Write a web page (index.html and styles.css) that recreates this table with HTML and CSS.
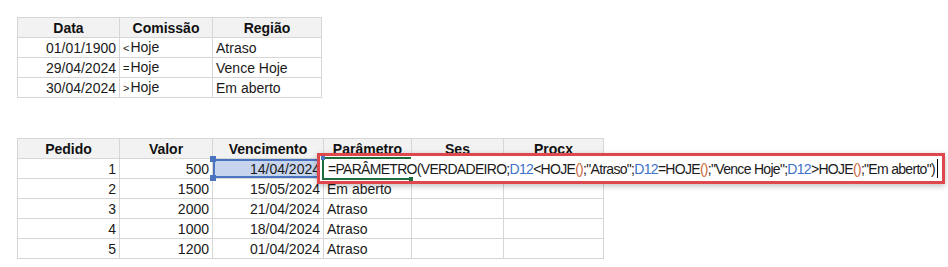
FILE: index.html
```html
<!DOCTYPE html>
<html lang="pt">
<head>
<meta charset="utf-8">
<link rel="stylesheet" href="styles.css">
</head>
<body>
<div class="sheet">
  <table class="grid top">
    <colgroup><col class="c1"><col class="c2"><col class="c3w"></colgroup>
    <tr class="head"><th>Data</th><th>Comissão</th><th>Região</th></tr>
    <tr><td class="r">01/01/1900</td><td><span class="op">&lt;</span>Hoje</td><td>Atraso</td></tr>
    <tr><td class="r">29/04/2024</td><td><span class="op">=</span>Hoje</td><td>Vence Hoje</td></tr>
    <tr><td class="r">30/04/2024</td><td><span class="op">&gt;</span>Hoje</td><td>Em aberto</td></tr>
  </table>

  <div class="lower">
    <table class="grid bottom">
      <colgroup><col class="c1"><col class="c2"><col class="c3"><col class="c4"><col class="c5"><col class="c6"></colgroup>
      <tr class="head"><th>Pedido</th><th>Valor</th><th>Vencimento</th><th>Parâmetro</th><th>Ses</th><th>Procx</th></tr>
      <tr><td class="r">1</td><td class="r">500</td><td class="r sel">14/04/2024<i class="h h1"></i><i class="h h2"></i><i class="h h3"></i><i class="h h4"></i></td><td></td><td></td><td></td></tr>
      <tr><td class="r">2</td><td class="r">1500</td><td class="r">15/05/2024</td><td>Em aberto</td><td></td><td></td></tr>
      <tr><td class="r">3</td><td class="r">2000</td><td class="r">21/04/2024</td><td>Atraso</td><td></td><td></td></tr>
      <tr><td class="r">4</td><td class="r">1000</td><td class="r">18/04/2024</td><td>Atraso</td><td></td><td></td></tr>
      <tr><td class="r">5</td><td class="r">1200</td><td class="r">01/04/2024</td><td>Atraso</td><td></td><td></td></tr>
    </table>

    <div class="formula">
      <div class="editcell"><i class="eh eh1"></i><i class="eh eh2"></i></div>
      <span class="ftext">=PARÂMETRO(VERDADEIRO;<span class="ref">D12</span>&lt;HOJE<span class="par">()</span>;"Atraso";<span class="ref">D12</span>=HOJE<span class="par">()</span>;"Vence Hoje";<span class="ref">D12</span>&gt;HOJE<span class="par">()</span>;"Em aberto")<span class="caret"></span></span>
    </div>
  </div>
</div>
</body>
</html>
```

FILE: styles.css
```css
* { box-sizing: border-box; }
html, body { margin: 0; padding: 0; background: #ffffff; }
body {
  width: 948px;
  height: 267px;
  overflow: hidden;
  font-family: "Liberation Sans", Arial, sans-serif;
  font-size: 14px;
  color: #1a1a1a;
}
.sheet {
  display: flex;
  flex-direction: column;
  align-items: flex-start;
  gap: 40px;
  padding: 17px 0 0 17px;
}
.grid {
  border-collapse: collapse;
  table-layout: fixed;
}
.grid.top { width: 304px; }
.grid.bottom { width: 586px; }
.grid th, .grid td {
  height: 20px;
  padding: 0 3px;
  border: 1px solid #d6d6d6;
  line-height: 18px;
  white-space: nowrap;
  overflow: visible;
}
.grid th {
  background: #f2f2f2;
  font-weight: bold;
  text-align: center;
  color: #111;
}
.grid td.r { text-align: right; }
.op { font-size: 11px; margin-right: 1px; }
.c1 { width: 102px; }
.c2 { width: 93px; }
.c3w { width: 109px; }
.c3 { width: 111px; }
.c4 { width: 88px; }
.c5 { width: 92px; }
.c6 { width: 100px; }

.lower { position: relative; }

.sel {
  position: relative;
  background: #c6d4ee;
  box-shadow: inset 0 0 0 2px #4a74bf;
}
.h {
  position: absolute;
  width: 6px;
  height: 6px;
  background: #4a74bf;
}
.h1 { left: -3px; top: -3px; }
.h2 { right: -3px; top: -3px; }
.h3 { left: -3px; bottom: -3px; }
.h4 { right: -3px; bottom: -3px; }

.formula {
  position: absolute;
  left: 300px;
  top: 15px;
  width: 628px;
  height: 31px;
  border: 3px solid #e0474c;
  background: #ffffff;
  box-shadow: 0 2px 6px rgba(0,0,0,0.25);
  display: flex;
  align-items: center;
  padding-left: 8px;
}
.editcell {
  position: absolute;
  left: 2px;
  top: 1px;
  width: 89px;
  height: 23px;
  border-left: 2px solid #1e6b3c;
  border-top: 2px solid #1e6b3c;
  border-bottom: 2px solid #1e6b3c;
}
.eh {
  position: absolute;
  width: 4px;
  height: 4px;
  background: #1e6b3c;
}
.eh1 { right: -2px; bottom: -3px; }
.eh2 { left: -3px; top: -3px; background: #4a74bf; }
.ftext {
  position: relative;
  font-size: 14px;
  letter-spacing: -0.7px;
  white-space: nowrap;
  color: #1a1a1a;
}
.ref { color: #3d72c8; }
.par { color: #c9663a; }
.caret {
  display: inline-block;
  width: 1px;
  height: 19px;
  background: #000;
  vertical-align: -4px;
  margin-left: 2px;
}
```
